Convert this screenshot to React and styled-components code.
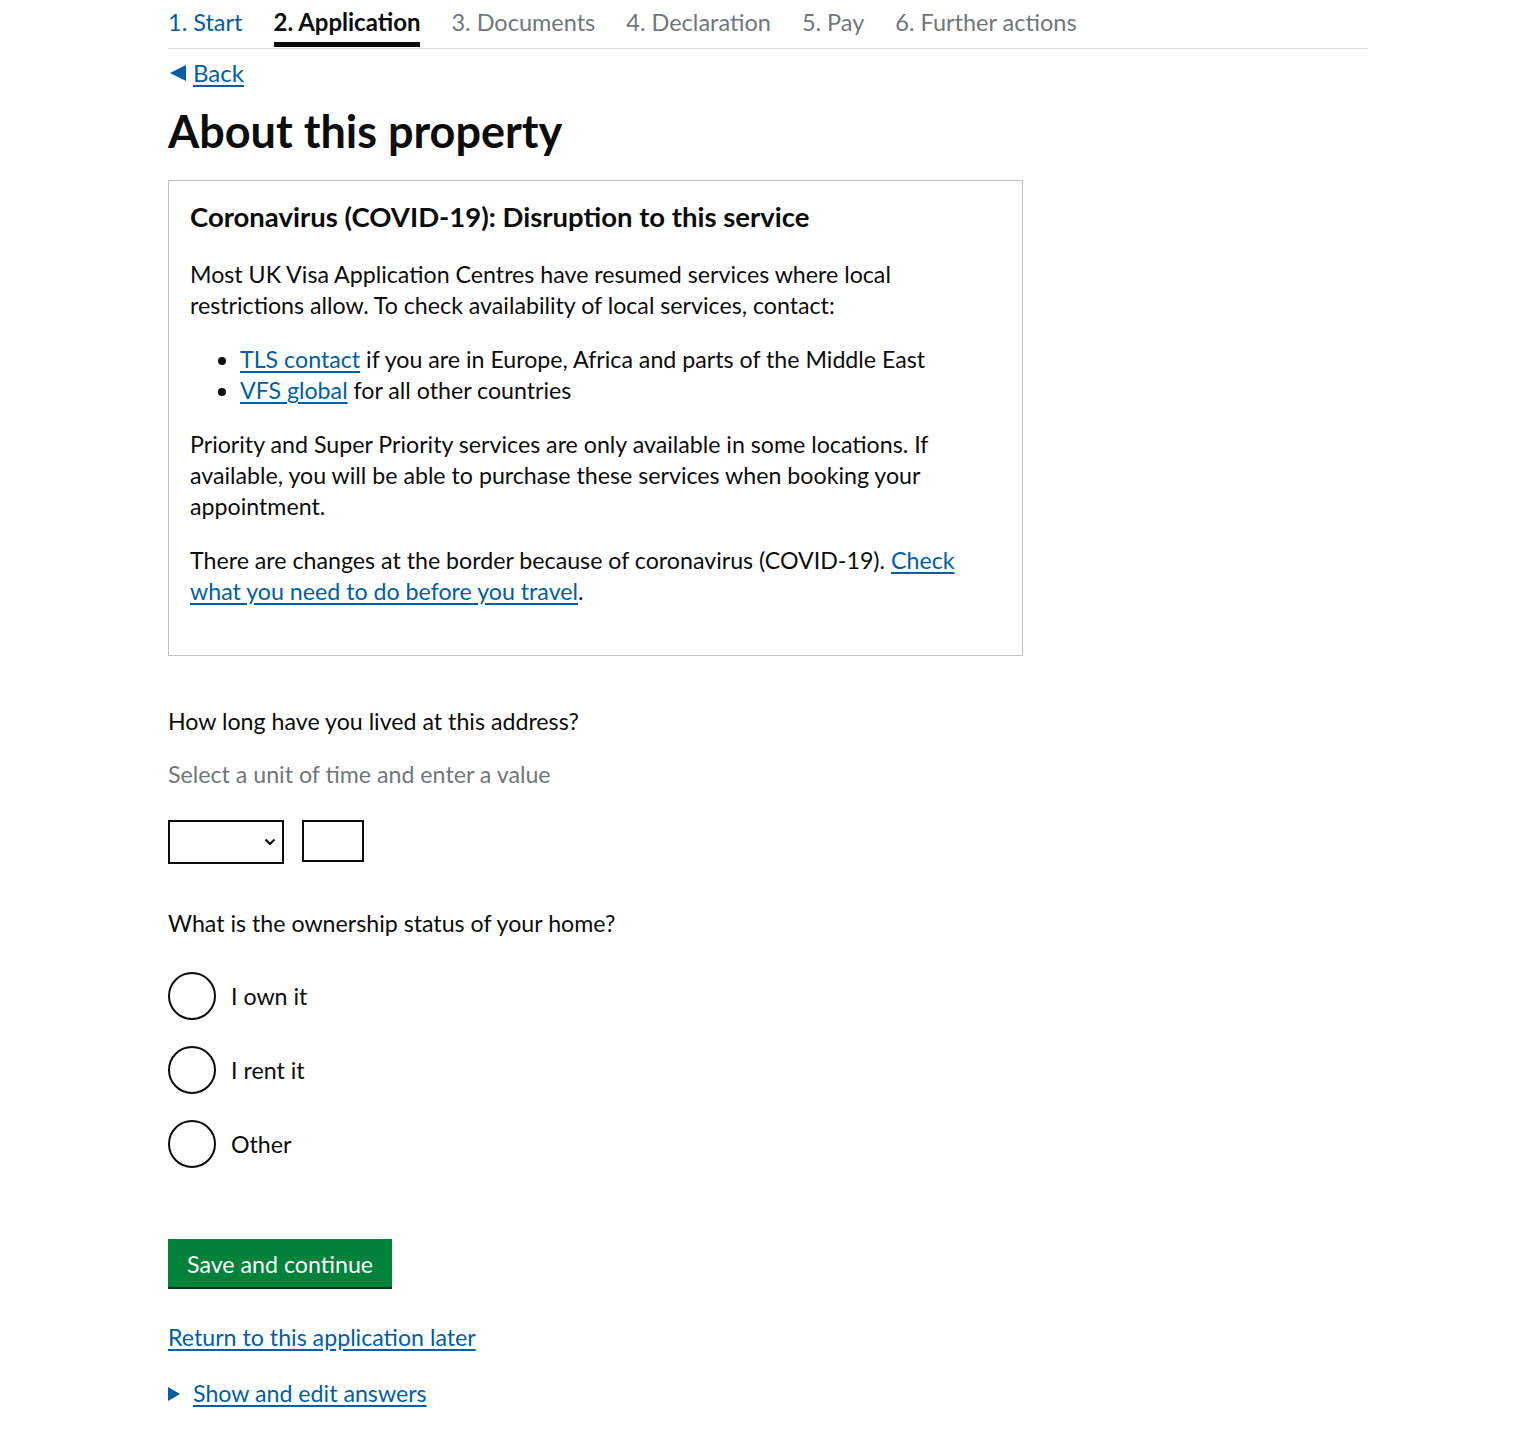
import React from "react";
import styled, { createGlobalStyle } from "styled-components";

const GlobalStyle = createGlobalStyle`
  body {
    margin: 0;
    background: #ffffff;
    color: #0b0c0c;
    font-family: Lato, "Liberation Sans", sans-serif;
  }
`;

const steps = [
  { label: "1. Start", state: "done" },
  { label: "2. Application", state: "current" },
  { label: "3. Documents", state: "todo" },
  { label: "4. Declaration", state: "todo" },
  { label: "5. Pay", state: "todo" },
  { label: "6. Further actions", state: "todo" },
];

const App = () => {
  return (
    <React.Fragment>
      <GlobalStyle />
      <Page>
        <StepNav>
          {steps.map((s) => (
            <Step key={s.label} state={s.state}>
              {s.label}
            </Step>
          ))}
        </StepNav>

        <BackLink href="#">
          <svg width="16" height="16" viewBox="0 0 16 16">
            <polygon points="0,8 16,0 16,16" fill="#005ea5" />
          </svg>
          <span>Back</span>
        </BackLink>

        <Title>About this property</Title>

        <Notice>
          <NoticeTitle>Coronavirus (COVID-19): Disruption to this service</NoticeTitle>
          <Para>
            Most UK Visa Application Centres have resumed services where local
            restrictions allow. To check availability of local services, contact:
          </Para>
          <List>
            <li>
              <Link href="#">TLS contact</Link> if you are in Europe, Africa and parts of the Middle East
            </li>
            <li>
              <Link href="#">VFS global</Link> for all other countries
            </li>
          </List>
          <Para>
            Priority and Super Priority services are only available in some locations. If
            available, you will be able to purchase these services when booking your
            appointment.
          </Para>
          <Para>
            There are changes at the border because of coronavirus (COVID-19).{" "}
            <Link href="#">Check what you need to do before you travel</Link>.
          </Para>
        </Notice>

        <Question>How long have you lived at this address?</Question>
        <Hint>Select a unit of time and enter a value</Hint>
        <InputRow>
          <SelectBox>
            <svg width="12" height="8" viewBox="0 0 12 8">
              <polyline points="1.5,1.5 6,6 10.5,1.5" fill="none" stroke="#0b0c0c" strokeWidth="2.2" />
            </svg>
          </SelectBox>
          <TextBox />
        </InputRow>

        <Question gap="44px">What is the ownership status of your home?</Question>
        <Radios>
          {["I own it", "I rent it", "Other"].map((r) => (
            <RadioRow key={r}>
              <RadioCircle />
              <RadioLabel>{r}</RadioLabel>
            </RadioRow>
          ))}
        </Radios>

        <Button>Save and continue</Button>

        <FooterLink href="#">Return to this application later</FooterLink>

        <Details>
          <svg width="12" height="14" viewBox="0 0 12 14">
            <polygon points="0,0 12,7 0,14" fill="#005ea5" />
          </svg>
          <Link href="#">Show and edit answers</Link>
        </Details>
      </Page>
    </React.Fragment>
  );
};

const Page = styled.div`
  width: 1200px;
  margin-left: 168px;
  padding-bottom: 20px;
  font-size: 23.2px;
`;

const StepNav = styled.nav`
  display: flex;
  gap: 31px;
  height: 48px;
  border-bottom: 1px solid #dee0e2;
`;

const Step = styled.div`
  padding-top: 8px;
  height: 47px;
  box-sizing: border-box;
  line-height: 28px;
  font-size: ${(p) => (p.state === "current" ? "24px" : "23.5px")};
  font-weight: ${(p) => (p.state === "current" ? 700 : 400)};
  color: ${(p) =>
    p.state === "done" ? "#005ea5" : p.state === "current" ? "#0b0c0c" : "#6f777b"};
  border-bottom: ${(p) => (p.state === "current" ? "5px solid #0b0c0c" : "none")};
`;

const BackLink = styled.a`
  display: inline-flex;
  align-items: center;
  gap: 7px;
  margin-top: 9px;
  margin-left: 2px;
  color: #005ea5;
  font-size: 24px;
  line-height: 30px;
  text-decoration: none;
  span {
    text-decoration: underline;
    text-underline-offset: 3px;
  }
`;

const Title = styled.h1`
  margin: 17px 0 23px;
  font-size: 45px;
  line-height: 52px;
  font-weight: 700;
`;

const Notice = styled.div`
  width: 855px;
  box-sizing: border-box;
  border: 1px solid #bfc1c3;
  padding: 18px 21px 25px;
`;

const NoticeTitle = styled.h2`
  margin: 0 0 24px;
  font-size: 27.5px;
  line-height: 36px;
  font-weight: 700;
`;

const Para = styled.p`
  margin: 0 0 23px;
  line-height: 31px;
`;

const List = styled.ul`
  margin: 0 0 23px;
  padding-left: 50px;
  line-height: 31px;
`;

const Link = styled.a`
  color: #005ea5;
  text-decoration: underline;
  text-underline-offset: 3px;
`;

const Question = styled.div`
  margin-top: ${(p) => p.gap || "50px"};
  line-height: 31px;
`;

const Hint = styled.div`
  margin-top: 22px;
  line-height: 31px;
  color: #6f777b;
`;

const InputRow = styled.div`
  display: flex;
  gap: 18px;
  margin-top: 30px;
  align-items: flex-start;
`;

const SelectBox = styled.div`
  width: 116px;
  height: 44px;
  box-sizing: border-box;
  border: 2px solid #0b0c0c;
  display: flex;
  align-items: center;
  justify-content: flex-end;
  padding-right: 6px;
`;

const TextBox = styled.div`
  width: 62px;
  height: 42px;
  box-sizing: border-box;
  border: 2px solid #0b0c0c;
`;

const Radios = styled.div`
  display: flex;
  flex-direction: column;
  gap: 26px;
  margin-top: 33px;
`;

const RadioRow = styled.div`
  display: flex;
  align-items: center;
  gap: 15px;
`;

const RadioCircle = styled.div`
  width: 48px;
  height: 48px;
  box-sizing: border-box;
  border: 2px solid #0b0c0c;
  border-radius: 50%;
`;

const RadioLabel = styled.span`
  line-height: 31px;
`;

const Button = styled.button`
  display: block;
  margin-top: 71px;
  padding: 10px 19px 8px;
  border: 0;
  background: #00823b;
  box-shadow: 0 2px 0 #003618;
  color: #ffffff;
  font-family: inherit;
  font-size: 23.2px;
  line-height: 30px;
  cursor: pointer;
`;

const FooterLink = styled(Link)`
  display: inline-block;
  margin-top: 35px;
  line-height: 31px;
`;

const Details = styled.div`
  display: flex;
  align-items: center;
  gap: 13px;
  margin-top: 25px;
  line-height: 31px;
`;

export default App;
